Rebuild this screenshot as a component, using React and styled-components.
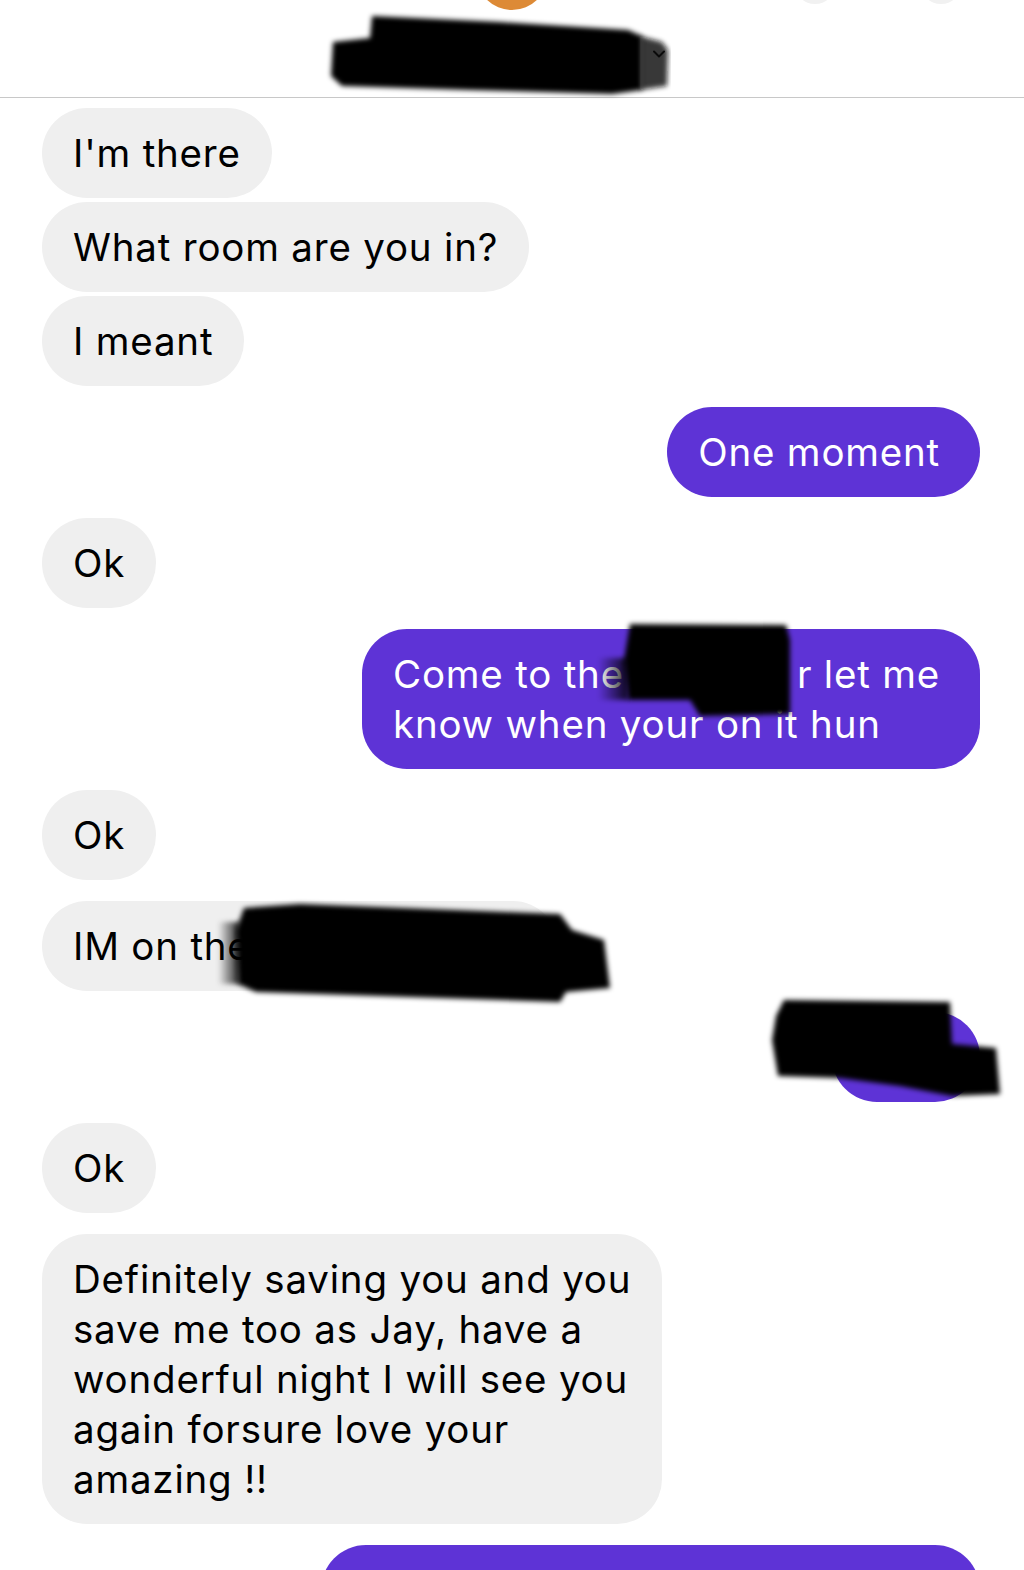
import React from "react";
import styled, { createGlobalStyle } from "styled-components";

const GlobalStyle = createGlobalStyle`
  html, body {
    margin: 0;
    padding: 0;
    background: #fff;
  }
  body {
    font-family: "Inter", "Liberation Sans", sans-serif;
    -webkit-font-smoothing: antialiased;
  }
`;

const Page = styled.div`
  position: relative;
  width: 1024px;
  min-height: 1570px;
  overflow: hidden;
  background: #fff;
`;

const Header = styled.header`
  display: grid;
  grid-template-columns: 1fr auto 1fr;
  height: 97px;
  border-bottom: 1px solid #c8c8c8;
`;

const HeaderCenter = styled.div`
  grid-column: 2;
  display: flex;
  flex-direction: column;
  align-items: center;
`;

const Avatar = styled.div`
  width: 72px;
  height: 72px;
  margin-top: -62px;
  border-radius: 50%;
  background: #dd8a36;
`;

const NameRow = styled.div`
  display: flex;
  align-items: center;
  gap: 4px;
  margin-top: 32px;
  height: 24px;
`;

const HiddenName = styled.span`
  display: inline-block;
  width: 290px;
  height: 24px;
`;

const HeaderActions = styled.div`
  grid-column: 3;
  display: flex;
  justify-content: flex-end;
  gap: 84px;
  padding-right: 62px;
`;

const ActionCircle = styled.div`
  width: 42px;
  height: 42px;
  margin-top: -38px;
  border-radius: 50%;
  background: #f1f1f1;
`;

const Thread = styled.div`
  display: flex;
  flex-direction: column;
  padding: 10px 44px 0 42px;
`;

const Row = styled.div`
  display: flex;
  justify-content: ${p => (p.$mine ? "flex-end" : "flex-start")};
  margin-top: ${p => (p.$grouped ? "4px" : "21px")};
  &:first-child {
    margin-top: 0;
  }
`;

const Bubble = styled.div`
  padding: ${p => (p.$mine ? "20px 40px 20px 31px" : "20px 31px")};
  border-radius: 45px;
  background: ${p => (p.$mine ? "#5e33d6" : "#efefef")};
  color: ${p => (p.$mine ? "#fff" : "#000")};
  font-size: 38.5px;
  line-height: 50px;
  letter-spacing: 0.8px;
  white-space: nowrap;
`;

const Hidden = styled.span`
  display: inline-block;
  width: ${p => p.$w}px;
  height: 1px;
`;

const Overlay = styled.svg`
  position: absolute;
  top: 0;
  left: 0;
  pointer-events: none;
`;

const messages = [
  { text: ["I'm there"] },
  { text: ["What room are you in?"], grouped: true },
  { text: ["I meant"], grouped: true },
  { mine: true, text: ["One moment"] },
  { text: ["Ok"] },
  {
    mine: true,
    text: [["Come to the", { hide: 173 }, "r let me"], "know when your on it hun"],
  },
  { text: ["Ok"] },
  { text: [["IM on the", { hide: 276 }]] },
  { mine: true, text: [[{ hide: 77 }]] },
  { text: ["Ok"] },
  {
    text: [
      "Definitely saving you and you",
      "save me too as Jay, have a",
      "wonderful night I will see you",
      "again forsure love your",
      "amazing !!",
    ],
  },
  { mine: true, text: [[{ hide: 588 }], [{ hide: 588 }]] },
];

const renderLine = line => {
  if (typeof line === "string") return line;
  return line.map((part, i) =>
    typeof part === "string" ? (
      <React.Fragment key={i}>{part}</React.Fragment>
    ) : (
      <Hidden key={i} $w={part.hide} />
    )
  );
};

// black marker strokes that hide names, drawn over the page
const Redactions = () => (
  <Overlay width="1024" height="1570" viewBox="0 0 1024 1570">
    <defs>
      <filter id="smudge" x="-10%" y="-30%" width="120%" height="160%">
        <feGaussianBlur stdDeviation="2.4" />
      </filter>
      <linearGradient id="edgeFade" x1="0" y1="0" x2="1" y2="0">
        <stop offset="0" stopColor="#000" stopOpacity="0" />
        <stop offset="1" stopColor="#000" stopOpacity="0.85" />
      </linearGradient>
    </defs>
    <g fill="#000" filter="url(#smudge)">
      <polygon points="372,16 500,22 628,30 642,36 642,90 612,94 470,90 342,86 331,76 333,42 370,38" />
      <polygon points="630,624 786,625 790,640 790,714 700,716 690,700 628,700 624,660" />
      <polygon points="244,908 300,904 560,914 572,930 604,940 610,988 566,992 560,1002 256,992 238,984 236,930" />
      <polygon points="784,1000 950,1002 952,1044 996,1048 1000,1094 952,1096 900,1086 840,1078 778,1076 772,1040 776,1016" />
    </g>
    <polygon points="640,36 662,42 668,50 667,86 640,90" fill="#111" opacity="0.82" filter="url(#smudge)" />
    {/* soft fade where the marker starts over a word */}
    <rect x="598" y="658" width="30" height="42" fill="url(#edgeFade)" filter="url(#smudge)" />
    <rect x="218" y="922" width="22" height="62" fill="url(#edgeFade)" filter="url(#smudge)" />
  </Overlay>
);

const Chevron = () => (
  <svg width="14" height="10" viewBox="0 0 14 10">
    <path d="M2 2.5 L7 7.5 L12 2.5" fill="none" stroke="#000" strokeWidth="2" strokeLinecap="round" strokeLinejoin="round" />
  </svg>
);

export default function App() {
  return (
    <Page>
      <GlobalStyle />
      <Header>
        <HeaderCenter>
          <Avatar />
          <NameRow>
            <HiddenName />
            <Chevron />
          </NameRow>
        </HeaderCenter>
        <HeaderActions>
          <ActionCircle />
          <ActionCircle />
        </HeaderActions>
      </Header>
      <Thread>
        {messages.map((m, i) => (
          <Row key={i} $mine={m.mine} $grouped={m.grouped}>
            <Bubble $mine={m.mine}>
              {m.text.map((line, j) => (
                <React.Fragment key={j}>
                  {j > 0 && <br />}
                  {renderLine(line)}
                </React.Fragment>
              ))}
            </Bubble>
          </Row>
        ))}
      </Thread>
      <Redactions />
    </Page>
  );
}
